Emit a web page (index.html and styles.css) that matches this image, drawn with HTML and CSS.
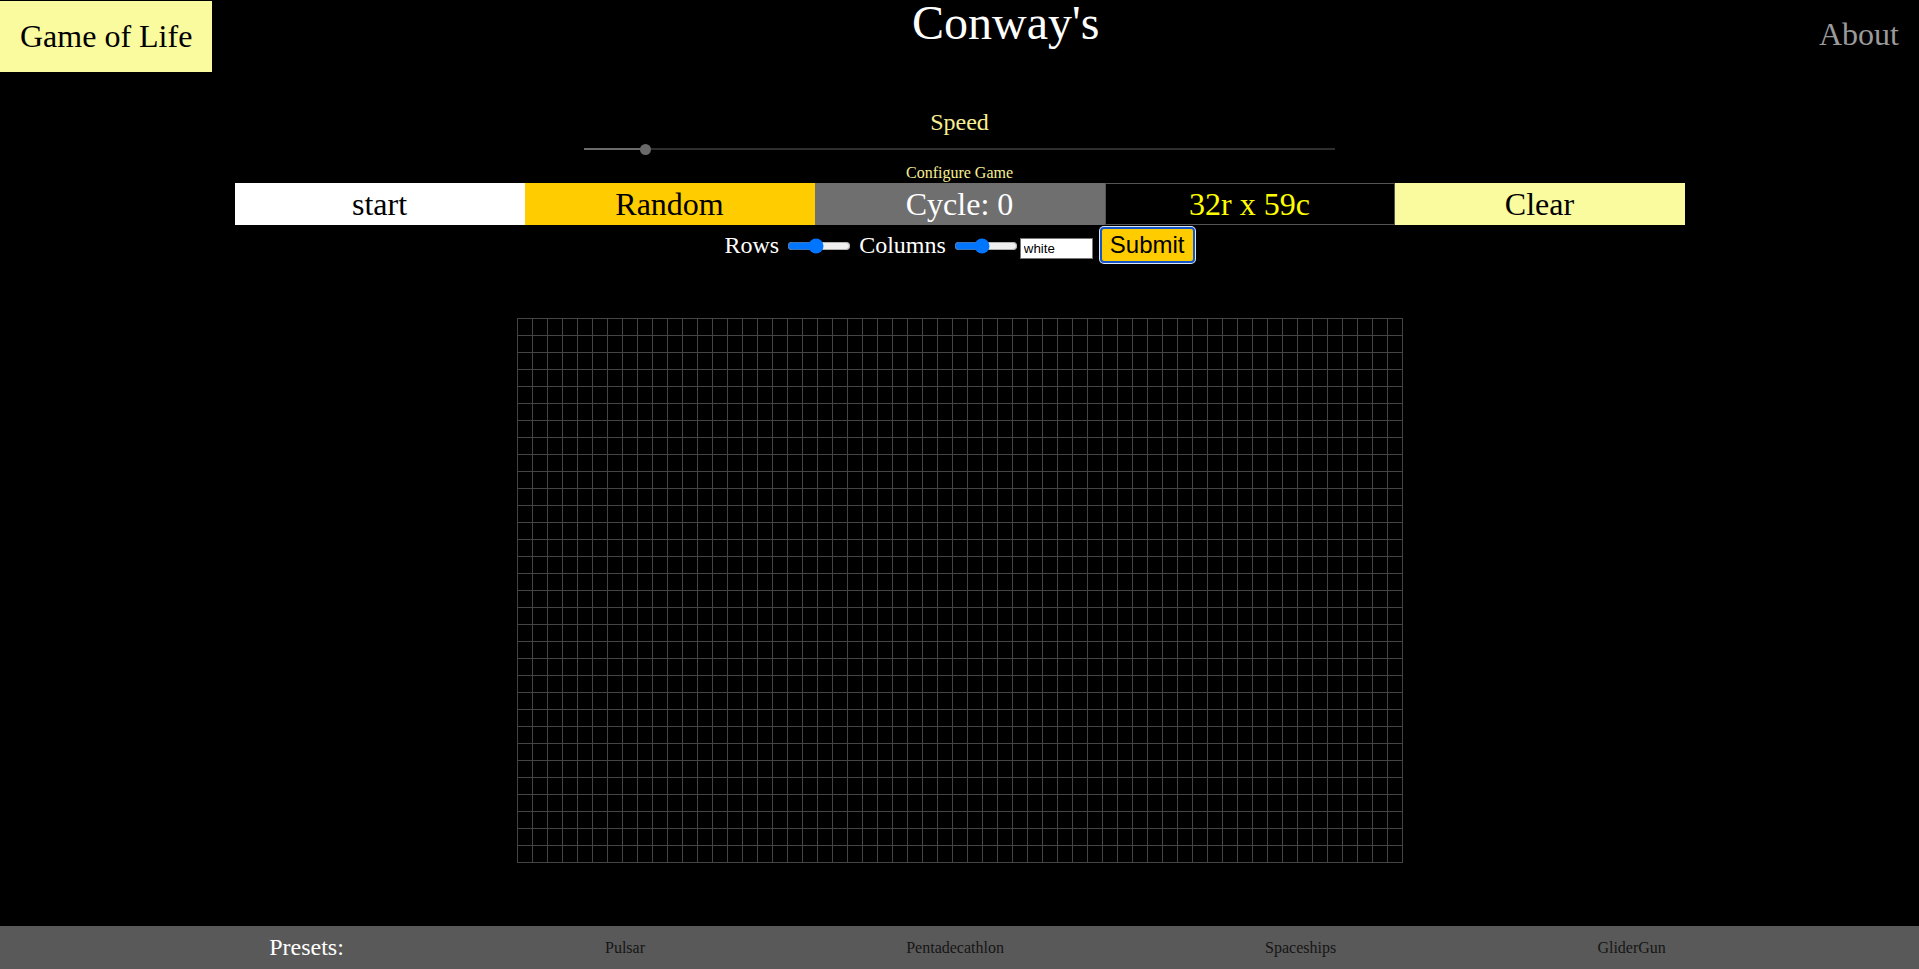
FILE: index.html
```html
<!DOCTYPE html>
<html lang="en">
<head>
<meta charset="utf-8">
<title>Conway's Game of Life</title>
<link rel="stylesheet" href="styles.css">
</head>
<body>
<header class="topbar">
  <div class="brand">Game of Life</div>
  <h1 class="title">Conway's</h1>
  <a class="about" href="#about">About</a>
</header>
<main class="app">
  <section class="speed">
    <div class="speed-label">Speed</div>
    <input class="speed-range" type="range" min="0" max="1000" value="76">
  </section>
  <div class="config-label">Configure Game</div>
  <div class="controls">
    <button class="ctl ctl-start">start</button>
    <button class="ctl ctl-random">Random</button>
    <div class="ctl ctl-cycle">Cycle: 0</div>
    <div class="ctl ctl-size">32r x 59c</div>
    <button class="ctl ctl-clear">Clear</button>
  </div>
  <form class="dims">
    Rows <input class="dim-range" type="range" min="0" max="100" value="43"> Columns <input class="dim-range" type="range" min="0" max="100" value="43"><input class="color-input" type="text" value="white"> <button class="submit" type="button">Submit</button>
  </form>
  <div class="board" id="board"></div>
</main>
<footer class="footer">
  <div class="presets">
    <span class="presets-title">Presets:</span>
    <a class="preset">Pulsar</a>
    <a class="preset">Pentadecathlon</a>
    <a class="preset">Spaceships</a>
    <a class="preset">GliderGun</a>
  </div>
</footer>
<script src="script.js"></script>
</body>
</html>
```
FILE: styles.css
```css
html, body {
  margin: 0;
  padding: 0;
  background: #000;
}
body {
  font-family: "Liberation Serif", "Times New Roman", serif;
  color: #fff;
  min-height: 100vh;
}
.topbar {
  display: flex;
  justify-content: space-between;
  align-items: flex-start;
}
.brand {
  margin-top: 1px;
  padding: 17px 20px;
  background: #fafa9f;
  color: #000;
  font-size: 32px;
}
.title {
  margin: 0;
  font-size: 48px;
  font-weight: normal;
  line-height: 46px;
  color: #fff;
}
.about {
  padding: 16px 20px 0;
  font-size: 32px;
  color: #9a9a9a;
  text-decoration: none;
}
.app {
  display: flex;
  flex-direction: column;
  align-items: center;
}
.speed {
  display: flex;
  flex-direction: column;
  align-items: center;
  margin-top: 37px;
}
.speed-label {
  font-size: 24px;
  color: #f8ee93;
}
.speed-range {
  -webkit-appearance: none;
  appearance: none;
  display: block;
  width: 751px;
  height: 2px;
  margin: 12px 0 0;
  background: linear-gradient(to right, #6a6a6a 0 62px, #2e2e2e 62px);
  outline: none;
}
.speed-range::-webkit-slider-thumb {
  -webkit-appearance: none;
  appearance: none;
  width: 11px;
  height: 11px;
  border-radius: 50%;
  background: #6a6a6a;
}
.config-label {
  margin-top: 14px;
  font-size: 16px;
  color: #f8ee93;
}
.controls {
  display: grid;
  grid-template-columns: repeat(5, 1fr);
  width: 1450px;
  height: 42px;
  margin-top: 1px;
}
.ctl {
  box-sizing: border-box;
  display: flex;
  align-items: center;
  justify-content: center;
  height: 42px;
  margin: 0;
  padding: 0;
  border: none;
  font-family: "Liberation Serif", "Times New Roman", serif;
  font-size: 32px;
  color: #000;
}
.ctl-start { background: #fff; }
.ctl-random { background: #ffcc00; }
.ctl-cycle { background: #6f6f6f; color: #fff; }
.ctl-size { background: #000; color: #ffff00; border: 1px solid #555; }
.ctl-clear { background: #fafa9f; }
.dims {
  margin: 2px 0 0;
  font-size: 24px;
  color: #fff;
  text-align: center;
}
.dim-range {
  width: 64px;
  margin: 2px;
  vertical-align: -1px;
}
.color-input {
  box-sizing: border-box;
  width: 73px;
  height: 21px;
  margin: 0;
  padding: 1px 3px;
  border: 1px solid #767676;
  font-family: "Liberation Sans", Arial, sans-serif;
  font-size: 13.33px;
  color: #000;
  background: #fff;
}
.submit {
  box-sizing: border-box;
  height: 36px;
  margin: 0 0 0 1px;
  padding: 0 8px;
  border: 2px solid #1456c8;
  border-radius: 4px;
  box-shadow: 0 0 0 1px #dfe7f7;
  background: #ffcc00;
  font-family: "Liberation Sans", Arial, sans-serif;
  font-size: 24px;
  color: #000;
}
.board {
  display: grid;
  grid-template-columns: repeat(59, 14px);
  grid-auto-rows: 16px;
  gap: 1px;
  padding: 1px;
  margin-top: 55px;
  background: #444;
}
.cell {
  background: #000;
}
.footer {
  position: fixed;
  left: 0;
  right: 0;
  bottom: 0;
  height: 43px;
  background: #595959;
  overflow: hidden;
}
.presets {
  display: flex;
  justify-content: space-evenly;
  align-items: center;
  width: 100%;
  height: 100%;
  margin-left: 8px;
}
.presets-title {
  font-size: 24px;
  color: #fff;
}
.preset {
  font-size: 16px;
  color: #151515;
  cursor: pointer;
}
```
FILE: script.js
```js
(function () {
  var rows = 32, cols = 59;
  var board = document.getElementById('board');
  var frag = document.createDocumentFragment();
  for (var r = 0; r < rows; r++) {
    for (var c = 0; c < cols; c++) {
      var cell = document.createElement('div');
      cell.className = 'cell';
      frag.appendChild(cell);
    }
  }
  board.appendChild(frag);
})();
```
